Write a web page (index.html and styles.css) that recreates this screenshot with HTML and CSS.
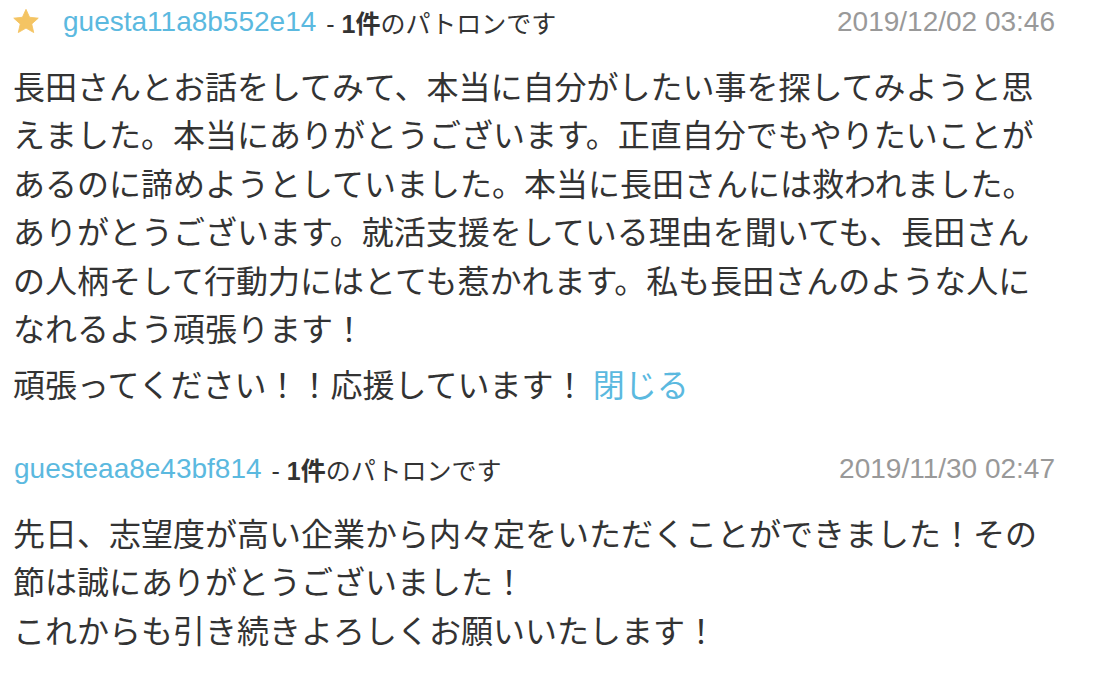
FILE: index.html
```html
<!DOCTYPE html>
<html lang="ja">
<head>
<meta charset="utf-8">
<link rel="stylesheet" href="styles.css">
</head>
<body>
<div class="comments">
  <div class="comment">
    <div class="head">
      <div class="who">
        <svg class="star" viewBox="0 0 24 23" width="26" height="25"><path d="M12 0.3l3.3 7.3 8 .8-6 5.4 1.8 7.9L12 17.6l-7.1 4.1 1.8-7.9-6-5.4 8-.8z" fill="#f4c463" stroke="#f4c463" stroke-width="0.8" stroke-linejoin="round"/></svg>
        <a class="user">guesta11a8b552e14</a>
        <span class="patron">- <b>1件</b>のパトロンです</span>
      </div>
      <span class="date">2019/12/02 03:46</span>
    </div>
    <p class="body">長田さんとお話をしてみて、本当に自分がしたい事を探してみようと思えました。本当にありがとうございます。正直自分でもやりたいことがあるのに諦めようとしていました。本当に長田さんには救われました。ありがとうございます。就活支援をしている理由を聞いても、長田さんの人柄そして行動力にはとても惹かれます。私も長田さんのような人になれるよう頑張ります！</p>
    <p class="body last">頑張ってください！！応援しています！ <a class="close">閉じる</a></p>
  </div>
  <div class="comment">
    <div class="head">
      <div class="who">
        <a class="user">guesteaa8e43bf814</a>
        <span class="patron">- <b>1件</b>のパトロンです</span>
      </div>
      <span class="date">2019/11/30 02:47</span>
    </div>
    <p class="body">先日、志望度が高い企業から内々定をいただくことができました！その節は誠にありがとうございました！<br>これからも引き続きよろしくお願いいたします！</p>
  </div>
</div>
</body>
</html>
```
FILE: styles.css
```css
html, body {
  margin: 0;
  padding: 0;
  background: #fff;
}
body {
  font-family: "Liberation Sans", "Noto Sans CJK JP", sans-serif;
  color: #333;
}
.comments {
  padding: 0 58px 0 14px;
}
.comment {
  margin-bottom: 39px;
}
.head {
  display: flex;
  justify-content: space-between;
  align-items: center;
  height: 44px;
}
.who {
  display: flex;
  align-items: center;
}
.star {
  margin-left: -1px;
  margin-right: 24px;
  margin-top: -1px;
}
.user {
  color: #5bb9df;
  font-size: 28px;
}
.patron {
  font-size: 25px;
  margin-left: 10px;
  color: #333;
}
.patron b {
  font-weight: 700;
}
.date {
  font-size: 28px;
  color: #999;
  margin-right: -1px;
}
.body {
  margin: 17px 0 0 -1px;
  font-family: "Noto Sans CJK JP", sans-serif;
  font-size: 32px;
  line-height: 48.4px;
  color: #333;
}
.body.last {
  margin-top: 8px;
}
.close {
  color: #5bb9df;
}
```
